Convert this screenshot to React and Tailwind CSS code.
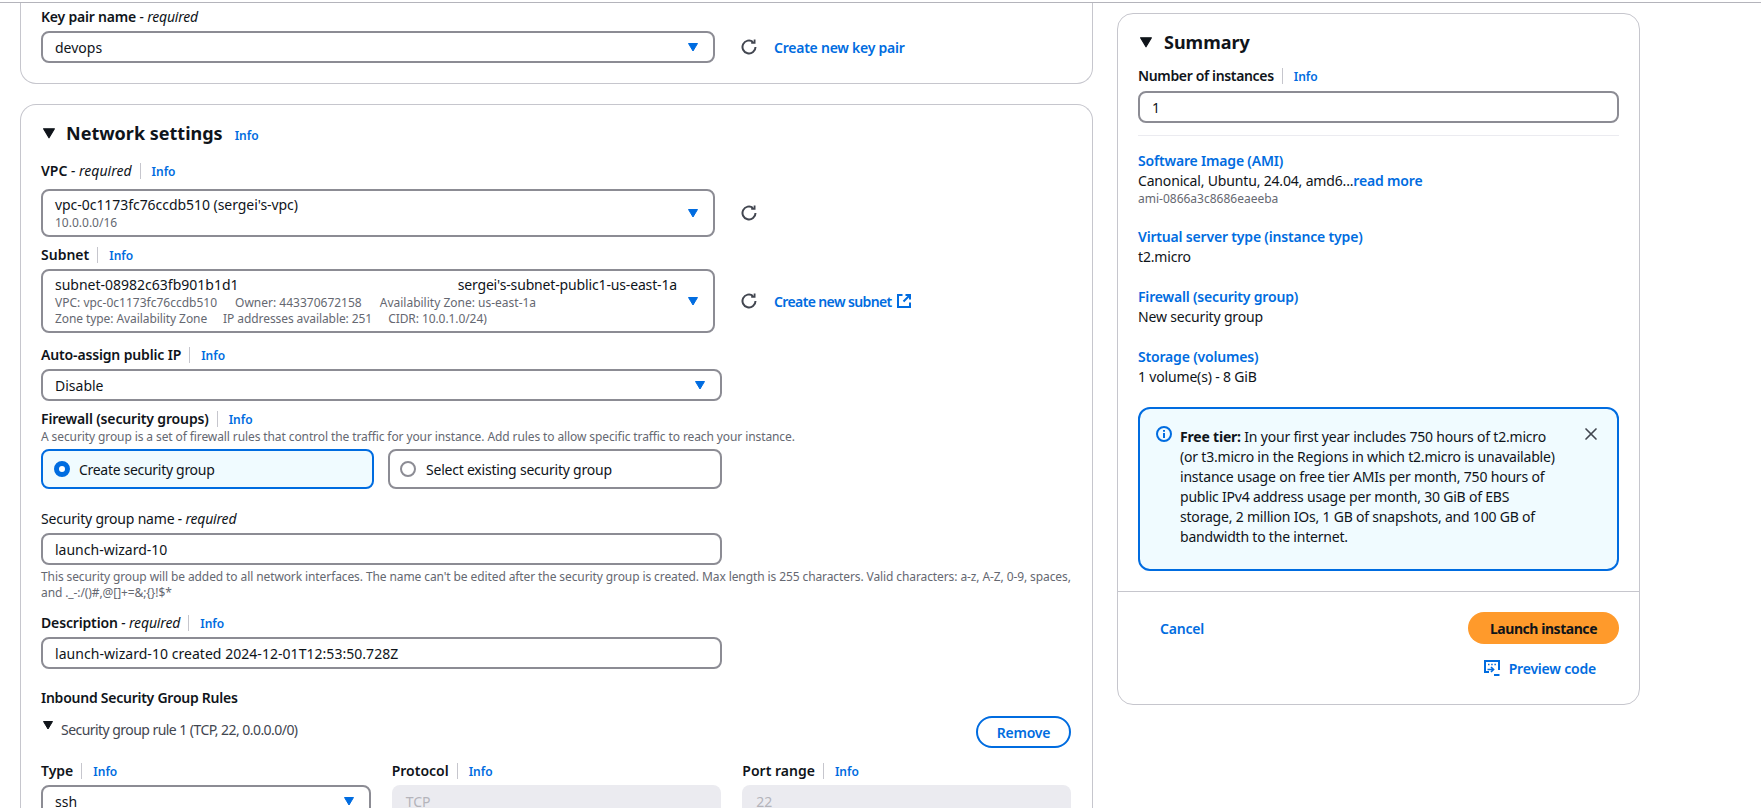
import { X } from "lucide-react";

function Caret({ className = "text-[#006ce0]", size = 10 }) {
  return (
    <svg width={size} height={size} viewBox="0 0 10 10" className={`shrink-0 ${className}`}>
      <path d="M0.5 1.5h9L5 9z" fill="currentColor" stroke="currentColor" strokeLinejoin="round" />
    </svg>
  );
}

function Refresh() {
  return (
    <svg width="16" height="16" viewBox="0 0 16 16" fill="none" stroke="#424650" strokeWidth="2" className="shrink-0">
      <path d="M14.5 8a6.5 6.5 0 1 1-2.4-5.05" />
      <path d="M13.6 0.5v3.4h-3.4" strokeWidth="1.8" />
    </svg>
  );
}

function Info() {
  return <span className="text-[12px] leading-4 font-semibold tracking-normal text-[#006ce0]">Info</span>;
}

function Label({ children, info, className = "" }) {
  return (
    <div className={`flex h-5 items-center text-[14px] leading-5 ${className}`}>
      <span className="font-semibold">{children}</span>
      {info && (
        <>
          <span className="mx-[8px] h-4 w-px bg-[#c6c6cd]" />
          <span className="ml-[3px]">
            <Info />
          </span>
        </>
      )}
    </div>
  );
}

function Req() {
  return <span className="font-normal italic"> - required</span>;
}

function Select({ children, className = "" }) {
  return (
    <div className={`flex items-center justify-between rounded-lg border-2 border-[#8c8c94] bg-white pl-[12px] pr-[15px] ${className}`}>
      <div className="min-w-0 flex-1">{children}</div>
      <Caret />
    </div>
  );
}

function Input({ children, className = "" }) {
  return (
    <div className={`flex h-8 items-center rounded-lg border-2 border-[#8c8c94] bg-white pl-[12px] text-[14px] ${className}`}>
      {children}
    </div>
  );
}

function SummaryItem({ title, className = "mt-5", children }) {
  return (
    <div className={className}>
      <div className="text-[14px] leading-5 font-semibold tracking-[-0.18px] text-[#006ce0]">{title}</div>
      <div className="text-[14px] leading-5 tracking-[-0.17px]">{children}</div>
    </div>
  );
}

export default function App() {
  return (
    <div className="h-[808px] overflow-hidden bg-white font-['Noto_Sans',sans-serif] text-[#0f141a]">
      <div className="mt-[2px] h-px bg-[#b4b4bb]" />
      <div className="flex items-start pl-5">
        <div className="w-[1073px] shrink-0">
          {/* Key pair card */}
          <div className="rounded-b-2xl border border-t-0 border-[#c6c6cd] px-5 pt-1 pb-5">
            <Label className="tracking-[-0.2px]">
              Key pair name<Req />
            </Label>
            <div className="mt-1 flex items-center">
              <Select className="h-8 w-[674px] text-[14px]">devops</Select>
              <div className="ml-[26px]">
                <Refresh />
              </div>
              <span className="ml-[17px] text-[14px] font-semibold tracking-[-0.24px] text-[#006ce0]">Create new key pair</span>
            </div>
          </div>

          {/* Network settings card */}
          <div className="mt-5 rounded-t-2xl border border-b-0 border-[#c6c6cd] pt-4 pr-[21px] pb-10 pl-5">
            <div className="flex h-6 items-center">
              <Caret className="ml-[2px] text-[#0f141a]" size={12} />
              <span className="ml-[11px] text-[18px] leading-6 font-bold">Network settings</span>
              <span className="ml-[12px] pt-[2px]">
                <Info />
              </span>
            </div>

            <Label info className="mt-4">
              VPC<Req />
            </Label>
            <div className="mt-2 flex items-center">
              <Select className="h-12 w-[674px]">
                <div className="text-[14px] leading-5 tracking-[-0.05px]">vpc-0c1173fc76ccdb510 (sergei's-vpc)</div>
                <div className="text-[12px] leading-4 text-[#656871]">10.0.0.0/16</div>
              </Select>
              <div className="ml-[26px]">
                <Refresh />
              </div>
            </div>

            <Label info className="mt-2">
              Subnet
            </Label>
            <div className="mt-1 flex items-center">
              <Select className="h-16 w-[674px]">
                <div className="flex w-[622px] justify-between text-[14px] leading-5">
                  <span>subnet-08982c63fb901b1d1</span>
                  <span className="tracking-[-0.15px]">sergei's-subnet-public1-us-east-1a</span>
                </div>
                <div className="flex gap-[18px] text-[12px] leading-4 text-[#656871]">
                  <span>VPC: vpc-0c1173fc76ccdb510</span>
                  <span>Owner: 443370672158</span>
                  <span>Availability Zone: us-east-1a</span>
                </div>
                <div className="flex gap-4 text-[12px] leading-4 tracking-[-0.08px] text-[#656871]">
                  <span>Zone type: Availability Zone</span>
                  <span>IP addresses available: 251</span>
                  <span>CIDR: 10.0.1.0/24)</span>
                </div>
              </Select>
              <div className="ml-[26px]">
                <Refresh />
              </div>
              <span className="ml-[17px] text-[14px] font-semibold tracking-[-0.62px] text-[#006ce0]">Create new subnet</span>
              <svg width="14" height="14" viewBox="0 0 14 14" fill="none" stroke="#006ce0" strokeWidth="2" className="ml-[5px]">
                <path d="M5.5 1H1v12h12V8.5" />
                <path d="M8.5 1H13v4.5M13 1L6.5 7.5" />
              </svg>
            </div>

            <Label info className="mt-3 tracking-[-0.15px]">
              Auto-assign public IP
            </Label>
            <Select className="mt-1 h-8 w-[681px] text-[14px]">Disable</Select>

            <Label info className="mt-2 tracking-[-0.15px]">
              Firewall (security groups)
            </Label>
            <div className="text-[12px] leading-4 tracking-[-0.1px] text-[#656871]">
              A security group is a set of firewall rules that control the traffic for your instance. Add rules to allow specific traffic to reach your instance.
            </div>
            <div className="mt-1 flex w-[681px] gap-[14px]">
              <div className="flex h-10 w-[333px] items-center rounded-lg border-2 border-[#006ce0] bg-[#f0fbff] pl-[11px] text-[14px] tracking-[-0.3px]">
                <span className="size-4 rounded-full border-[5px] border-[#006ce0] bg-white" />
                <span className="ml-[9px]">Create security group</span>
              </div>
              <div className="flex h-10 flex-1 items-center rounded-lg border-2 border-[#8c8c94] pl-[10px] text-[14px] tracking-[-0.22px]">
                <span className="size-4 rounded-full border-2 border-[#8c8c94] bg-white" />
                <span className="ml-[10px]">Select existing security group</span>
              </div>
            </div>

            <div className="mt-5 h-5 text-[14px] leading-5 tracking-[-0.2px]">
              Security group name<Req />
            </div>
            <Input className="mt-1 w-[681px]">launch-wizard-10</Input>
            <div className="mt-1 text-[12px] leading-4 tracking-[-0.1px] text-[#656871]">
              This security group will be added to all network interfaces. The name can't be edited after the security group is created. Max length is 255 characters. Valid characters: a-z, A-Z, 0-9, spaces, and ._-:/()#,@[]+=&amp;;{"{}"}!$*
            </div>

            <Label info className="mt-3 tracking-[-0.15px]">
              Description<Req />
            </Label>
            <Input className="mt-1 w-[681px]">
              <span className="tracking-[0.04px]">launch-wizard-10 created 2024-12-01T12:53:50.728Z</span>
            </Input>

            <Label className="mt-[19px] tracking-[-0.25px]">Inbound Security Group Rules</Label>

            <div className="mt-2 flex h-8 items-start justify-between">
              <div className="flex items-start">
                <Caret className="mt-[4px] ml-[2px] text-[#0f141a]" size={10} />
                <span className="mt-[4px] ml-[8px] text-[14px] leading-5 tracking-[-0.55px] text-[#424650]">Security group rule 1 (TCP, 22, 0.0.0.0/0)</span>
              </div>
              <div className="flex h-8 w-[95px] items-center justify-center rounded-full border-2 border-[#006ce0] text-[14px] font-semibold tracking-[-0.25px] text-[#006ce0]">
                Remove
              </div>
            </div>

            <div className="mt-[13px] flex gap-[21px]">
              <div className="w-[330px]">
                <Label info>Type</Label>
                <Select className="mt-1 h-8 text-[14px]">ssh</Select>
              </div>
              <div className="w-[330px]">
                <Label info>Protocol</Label>
                <div className="mt-1 flex h-8 items-center rounded-lg bg-[#ebebf0] pl-[14px] text-[14px] text-[#b4b4bb]">TCP</div>
              </div>
              <div className="w-[329px]">
                <Label info>Port range</Label>
                <div className="mt-1 flex h-8 items-center rounded-lg bg-[#ebebf0] pl-[14px] text-[14px] text-[#b4b4bb]">22</div>
              </div>
            </div>
          </div>
        </div>

        {/* Summary card */}
        <div className="mt-[10px] ml-6 w-[523px] shrink-0 rounded-2xl border border-[#c6c6cd] pb-[26px]">
          <div className="pt-4 pr-5 pl-5">
            <div className="flex h-6 items-center">
              <Caret className="ml-[2px] text-[#0f141a]" size={12} />
              <span className="ml-[12px] text-[18px] leading-6 font-bold">Summary</span>
            </div>
            <Label info className="mt-3 tracking-[-0.35px]">
              Number of instances
            </Label>
            <Input className="mt-[5px]">1</Input>
            <div className="mt-3 h-px bg-[#ebebf0]" />

            <SummaryItem title="Software Image (AMI)" className="mt-[15px]">
              Canonical, Ubuntu, 24.04, amd6...<span className="font-semibold text-[#006ce0]">read more</span>
            </SummaryItem>
            <div className="text-[12px] leading-4 text-[#656871]">ami-0866a3c8686eaeeba</div>
            <SummaryItem title="Virtual server type (instance type)">t2.micro</SummaryItem>
            <SummaryItem title="Firewall (security group)">New security group</SummaryItem>
            <SummaryItem title="Storage (volumes)">1 volume(s) - 8 GiB</SummaryItem>

            <div className="mt-5 flex h-[164px] items-start rounded-xl border-2 border-[#006ce0] bg-[#f0fbff] pt-[17px] pl-[16px]">
              <svg width="16" height="16" viewBox="0 0 16 16" fill="none" stroke="#006ce0" strokeWidth="2" className="shrink-0">
                <circle cx="8" cy="8" r="7" />
                <path d="M8 7v5M8 4v1.8" />
              </svg>
              <p className="mt-px ml-[8px] w-[378px] text-[14px] leading-5 tracking-[-0.2px]">
                <span className="font-bold">Free tier:</span> In your first year includes 750 hours of t2.micro (or t3.micro in the Regions in which t2.micro is unavailable) instance usage on free tier AMIs per month, 750 hours of public IPv4 address usage per month, 30 GiB of EBS storage, 2 million IOs, 1 GB of snapshots, and 100 GB of bandwidth to the internet.
              </p>
              <X size={20} strokeWidth={2} className="-mt-[2px] ml-[23px] text-[#424650]" />
            </div>
          </div>

          <div className="mt-5 h-px bg-[#c6c6cd]" />

          <div className="mt-5 flex items-center justify-between pr-5 pl-5">
            <span className="ml-[22px] text-[14px] font-semibold tracking-[-0.2px] text-[#006ce0]">Cancel</span>
            <div className="flex h-8 w-[151px] items-center justify-center rounded-full bg-[#ff9a2b] text-[14px] font-bold tracking-[-0.45px]">
              Launch instance
            </div>
          </div>
          <div className="mt-[14px] flex h-5 items-center justify-end pr-[43px]">
            <svg width="16" height="16" viewBox="0 0 16 16" fill="none" stroke="#006ce0" strokeWidth="2" className="mr-[9px]">
              <path d="M5 12H1V1h14v9" />
              <path d="M4 4.5h1.5M7.2 4.5h1.5M10.4 4.5h1.5" strokeWidth="1.6" />
              <path d="M3.5 9.5h6M7 7l2.6 2.5L7 12" strokeWidth="1.6" />
              <path d="M10 15h5.5" />
            </svg>
            <span className="text-[14px] font-semibold tracking-[-0.2px] text-[#006ce0]">Preview code</span>
          </div>
        </div>
      </div>
    </div>
  );
}
